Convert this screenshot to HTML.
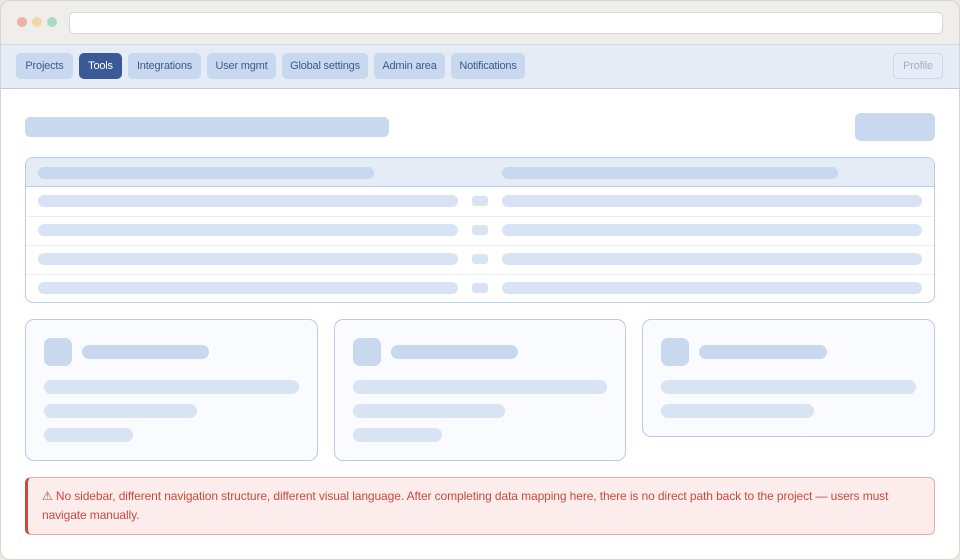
<!DOCTYPE html>
<html><head><meta charset="utf-8"><style>
*{box-sizing:border-box;margin:0;padding:0}
body{width:960px;height:560px;background:#e8e8e4;font-family:"Liberation Sans",sans-serif;position:relative;overflow:hidden}
.win{position:absolute;left:0;top:0;width:960px;height:560px;border-radius:10px;background:#fff;overflow:hidden}
.frame{position:absolute;left:0;top:0;width:960px;height:560px;border:1px solid #d4d4d0;border-radius:10px;z-index:9}
.a{position:absolute}
.title{left:0;top:0;width:960px;height:45px;background:#efeeea;border-bottom:1px solid #d8d8d4}
.dot{width:10px;height:10px;border-radius:50%;top:17px}
.url{left:69px;top:12px;width:874px;height:22px;background:#fff;border:1px solid #d8d8d4;border-radius:5px}
.nav{left:0;top:45px;width:960px;height:44px;background:#e5ecf6;border-bottom:1px solid #b8cbe8}
.btn{top:8px;height:26px;border-radius:5px;background:#c8d8ee;color:#3e5a8c;font-size:11px;line-height:26px;text-align:center;letter-spacing:-0.2px}
.sk{background:#c8d8ee;border-radius:6px}
.lt{background:#d8e3f3;border-radius:6px}
.card{background:#f9fbfe;border:1px solid #b8cbe8;border-radius:9px}
</style></head><body><div class="win">
<div class="a title"></div>
<div class="a dot" style="left:17px;background:#eeb1ab"></div>
<div class="a dot" style="left:32px;background:#eed9a5"></div>
<div class="a dot" style="left:47px;background:#abdac4"></div>
<div class="a url"></div>
<div class="a nav">
<div class="a btn" style="left:16px;width:57px">Projects</div>
<div class="a btn" style="left:79px;width:43px;background:#3b5998;color:#fff">Tools</div>
<div class="a btn" style="left:128px;width:73px">Integrations</div>
<div class="a btn" style="left:207px;width:69px">User mgmt</div>
<div class="a btn" style="left:282px;width:86px">Global settings</div>
<div class="a btn" style="left:374px;width:71px">Admin area</div>
<div class="a btn" style="left:451px;width:74px">Notifications</div>
<div class="a btn" style="left:893px;width:50px;background:transparent;border:1px solid #c8d8ee;color:#a0b0cc;line-height:24px">Profile</div>
</div>
<div class="a sk" style="left:25px;top:117px;width:364px;height:20px;border-radius:5px"></div>
<div class="a sk" style="left:855px;top:113px;width:80px;height:28px"></div>
<div class="a" style="left:25px;top:157px;width:910px;height:146px;border:1px solid #b8cbe8;border-radius:8px;overflow:hidden">
<div class="a" style="left:0;top:0;width:908px;height:29px;background:#e5ecf6;border-bottom:1px solid #b8cbe8"></div>
<div class="a sk" style="left:12px;top:9px;width:336px;height:12px"></div>
<div class="a sk" style="left:476px;top:9px;width:336px;height:12px"></div>
<div class="a" style="left:0;top:58px;width:908px;height:1px;background:#eceff6"></div>
<div class="a" style="left:0;top:87px;width:908px;height:1px;background:#eceff6"></div>
<div class="a" style="left:0;top:116px;width:908px;height:1px;background:#eceff6"></div>
</div>
<div class="a lt" style="left:38px;top:195px;width:420px;height:12px"></div><div class="a lt" style="left:472px;top:196px;width:16px;height:10px;border-radius:3px"></div><div class="a lt" style="left:502px;top:195px;width:420px;height:12px"></div>
<div class="a lt" style="left:38px;top:224px;width:420px;height:12px"></div><div class="a lt" style="left:472px;top:225px;width:16px;height:10px;border-radius:3px"></div><div class="a lt" style="left:502px;top:224px;width:420px;height:12px"></div>
<div class="a lt" style="left:38px;top:253px;width:420px;height:12px"></div><div class="a lt" style="left:472px;top:254px;width:16px;height:10px;border-radius:3px"></div><div class="a lt" style="left:502px;top:253px;width:420px;height:12px"></div>
<div class="a lt" style="left:38px;top:282px;width:420px;height:12px"></div><div class="a lt" style="left:472px;top:283px;width:16px;height:10px;border-radius:3px"></div><div class="a lt" style="left:502px;top:282px;width:420px;height:12px"></div>

<div class="a card" style="left:25px;top:319px;width:293px;height:142px"></div>
<div class="a card" style="left:334px;top:319px;width:292px;height:142px"></div>
<div class="a card" style="left:642px;top:319px;width:293px;height:118px"></div>

<div class="a sk" style="left:44px;top:338px;width:28px;height:28px;border-radius:7px"></div>
<div class="a sk" style="left:82px;top:345px;width:127px;height:14px;border-radius:7px"></div>
<div class="a lt" style="left:44px;top:380px;width:255px;height:14px;border-radius:7px"></div>
<div class="a lt" style="left:44px;top:404px;width:153px;height:14px;border-radius:7px"></div>
<div class="a lt" style="left:44px;top:428px;width:89px;height:14px;border-radius:7px"></div>

<div class="a sk" style="left:353px;top:338px;width:28px;height:28px;border-radius:7px"></div>
<div class="a sk" style="left:391px;top:345px;width:127px;height:14px;border-radius:7px"></div>
<div class="a lt" style="left:353px;top:380px;width:254px;height:14px;border-radius:7px"></div>
<div class="a lt" style="left:353px;top:404px;width:152px;height:14px;border-radius:7px"></div>
<div class="a lt" style="left:353px;top:428px;width:89px;height:14px;border-radius:7px"></div>

<div class="a sk" style="left:661px;top:338px;width:28px;height:28px;border-radius:7px"></div>
<div class="a sk" style="left:699px;top:345px;width:128px;height:14px;border-radius:7px"></div>
<div class="a lt" style="left:661px;top:380px;width:255px;height:14px;border-radius:7px"></div>
<div class="a lt" style="left:661px;top:404px;width:153px;height:14px;border-radius:7px"></div>

<div class="a" style="left:25px;top:477px;width:910px;height:58px;background:#fcecec;border:1px solid #eeaaa4;border-left:3px solid #c94a3e;border-radius:6px;color:#c94a3e;font-size:12px;line-height:19px;padding:9px 14px 0 14px;letter-spacing:-0.1px">⚠ No sidebar, different navigation structure, different visual language. After completing data mapping here, there is no direct path back to the project — users must navigate manually.</div>
</div><div class="frame"></div></body></html>
